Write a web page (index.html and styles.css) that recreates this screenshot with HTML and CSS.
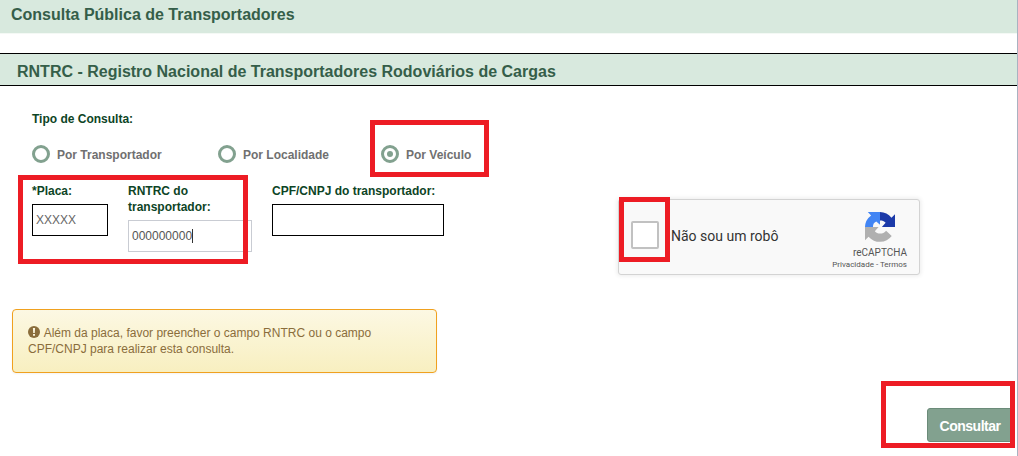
FILE: index.html
```html
<!DOCTYPE html>
<html lang="pt-BR">
<head>
  <meta charset="UTF-8">
  <meta name="viewport" content="width=device-width, initial-scale=1.0">
  <title>Consulta Pública de Transportadores</title>
  <link rel="stylesheet" href="styles.css">
</head>
<body>
  <h1 class="page-title">Consulta Pública de Transportadores</h1>
  <h2 class="section-title">RNTRC - Registro Nacional de Transportadores Rodoviários de Cargas</h2>

  <main class="main">
    <div class="form">
      <div class="form-title">Tipo de Consulta:</div>
      <div class="options">
        <label class="option"><span class="radio"></span><span class="option-text">Por Transportador</span></label>
        <label class="option"><span class="radio"></span><span class="option-text">Por Localidade</span></label>
        <label class="option"><span class="radio checked"></span><span class="option-text">Por Veículo</span></label>
      </div>
      <div class="fields">
        <div class="field placa">
          <label>*Placa:</label>
          <div class="input">XXXXX</div>
        </div>
        <div class="field rntrc">
          <label>RNTRC do transportador:</label>
          <div class="input focused">000000000<span class="caret"></span></div>
        </div>
        <div class="field cpf">
          <label>CPF/CNPJ do transportador:</label>
          <div class="input"></div>
        </div>
      </div>
    </div>

    <div class="captcha">
      <span class="captcha-check"></span>
      <span class="captcha-label">Não sou um robô</span>
      <div class="captcha-brand">
        <svg class="captcha-logo" viewBox="0 0 64 64">
          <path fill="#1c3aa9" d="M64 32V5l-7.600 7A32 32 0 0 0 32 0v18c5 0 9 1 12 5l-8 9z"/>
          <path fill="#4285f4" d="M32 0H6l7 7.500A32 32 0 0 0 0 32h17c0-6 2-10 7-12l8 7z"/>
          <path fill="#b0b0b0" d="M0 32v28l7.600-7A32 32 0 0 0 57 51L45 40c-6 8-19 8-24 1l8-9z"/>
        </svg>
        <div class="captcha-name">reCAPTCHA</div>
        <div class="captcha-links">Privacidade - Termos</div>
      </div>
    </div>
  </main>

  <div class="alert">
    <svg class="alert-icon" viewBox="0 0 12 12">
      <circle cx="6" cy="6" r="6" fill="#8a6d3b"/>
      <path fill="#fbf5dc" d="M4.900 2h2.200l-.3 5H5.200zM5 7.900h2v1.900H5z"/>
    </svg>
    Além da placa, favor preencher o campo RNTRC ou o campo CPF/CNPJ para realizar esta consulta.
  </div>

  <div class="actions">
    <button class="btn">Consultar</button>
  </div>

  <span class="mark mark-fields"></span>
  <span class="mark mark-option"></span>
  <span class="mark mark-captcha"></span>
  <span class="mark mark-button"></span>
  <span class="edge-handle"></span>
</body>
</html>
```
FILE: styles.css
```css
:root {
  --green: #355e49;
  --green-light: #d8e9de;
  --green-mid: #82a18f;
  --mark: #ed1c24;
}
* { box-sizing: border-box; margin: 0; padding: 0; }
body {
  position: relative;
  height: 456px;
  overflow: hidden;
  background: #fff;
  border-right: 1px solid #a9b2c1;
  font: 12px/16px "Liberation Sans", Arial, sans-serif;
}
.page-title,
.section-title {
  background: var(--green-light);
  color: var(--green);
  font-size: 16px;
  font-weight: 700;
  white-space: nowrap;
}
.page-title {
  height: 34px;
  padding-left: 11px;
  line-height: 29px;
  border-bottom: 1px solid #f4f9f5;
}
.section-title {
  height: 33px;
  margin-top: 19px;
  padding-left: 17px;
  line-height: 35px;
  border-top: 1px solid #000;
  border-bottom: 1px solid #000;
}

.main {
  display: flex;
  align-items: flex-start;
  height: 223px;
}
.form {
  width: 618px;
  padding: 25px 0 0 32px;
}
.form-title {
  color: #0d4426;
  font-weight: 700;
}
.options {
  display: grid;
  grid-template-columns: 186px 163px auto;
  margin-top: 18px;
}
.option {
  display: flex;
  align-items: center;
  gap: 7px;
  height: 18px;
  color: #707070;
  font-weight: 700;
}
.option-text {
  padding-top: 2px;
}
.radio {
  display: grid;
  place-items: center;
  width: 18px;
  height: 18px;
  border: 3px solid var(--green-mid);
  border-radius: 50%;
}
.radio.checked::after {
  content: "";
  width: 6px;
  height: 6px;
  border-radius: 50%;
  background: var(--green-mid);
}
.fields {
  display: flex;
  align-items: flex-start;
  gap: 20px;
  margin-top: 20px;
}
.field label {
  display: block;
  margin-bottom: 5px;
  color: #0d4426;
  font-weight: 700;
}
.placa { width: 76px; }
.rntrc { width: 124px; }
.cpf { width: 172px; }
.input {
  display: flex;
  align-items: center;
  height: 32px;
  padding-left: 3px;
  border: 1px solid #000;
  color: #666;
}
.input.focused {
  border-color: #c9ccd3;
  color: #555;
}
.caret {
  width: 1px;
  height: 14px;
  background: #333;
}

.captcha {
  display: flex;
  align-items: center;
  width: 302px;
  height: 76px;
  margin-top: 113px;
  padding: 0 12px;
  background: #f9f9f9;
  border: 1px solid #d3d3d3;
  border-radius: 3px;
  box-shadow: 0 0 4px 1px rgba(0,0,0,0.08);
  font-family: Roboto, sans-serif;
}
.captcha-check {
  width: 28px;
  height: 28px;
  margin-top: -4px;
  background: #fff;
  border: 2px solid #c1c1c1;
  border-radius: 2px;
}
.captcha-label {
  margin: -2px 0 0 12px;
  color: #333;
  font-size: 14px;
}
.captcha-brand {
  display: flex;
  flex-direction: column;
  align-items: flex-end;
  margin-left: auto;
  padding-top: 7px;
  color: #555;
}
.captcha-logo {
  width: 30px;
  height: 30px;
  margin-right: 12px;
}
.captcha-name {
  font-size: 10px;
  line-height: 14px;
  margin-top: 4px;
}
.captcha-links {
  font-size: 8px;
  line-height: 10px;
}

.alert {
  width: 425px;
  height: 64px;
  padding: 15px 50px 0 15px;
  background: linear-gradient(#fcf8e3, #f8efc0);
  border: 1px solid #f0a11f;
  border-radius: 4px;
  margin-left: 12px;
  color: #8a6d3b;
  box-shadow: 0 1px 2px rgba(0,0,0,0.05);
}
.alert-icon {
  width: 12px;
  height: 12px;
  margin-right: 1px;
  vertical-align: -1px;
}

.actions {
  display: flex;
  justify-content: flex-end;
  margin-top: 35px;
  padding-right: 4px;
}
.btn {
  width: 86px;
  height: 34px;
  padding-top: 1px;
  background: var(--green-mid);
  border: 1px solid #6b8b79;
  border-radius: 3px;
  color: #fff;
  font: 700 14px "Liberation Sans", Arial, sans-serif;
  letter-spacing: -0.5px;
}

/* red highlight boxes laid over the form */
.mark {
  position: absolute;
  border: 5px solid var(--mark);
}
.mark-fields { left: 18px; top: 175px; width: 230px; height: 89px; }
.mark-option { left: 370px; top: 120px; width: 119px; height: 57px; }
.mark-captcha { left: 619px; top: 197px; width: 51px; height: 65px; }
.mark-button { left: 881px; top: 381px; width: 134px; height: 67px; }
.edge-handle {
  position: absolute;
  right: -1px;
  top: 245px;
  width: 1px;
  height: 5px;
  background: #444;
}
```
